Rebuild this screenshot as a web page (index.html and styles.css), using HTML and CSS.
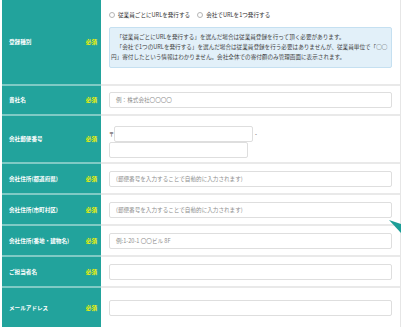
FILE: index.html
```html
<!DOCTYPE html>
<html lang="ja">
<head>
  <meta charset="UTF-8">
  <meta name="viewport" content="width=device-width, initial-scale=1.0">
  <title>企業登録</title>
  <link rel="stylesheet" href="styles.css">
</head>
<body>
<div class="form">
  <!-- 登録種別 -->
  <div class="row row-type">
    <div class="label"><span>登録種別</span><span class="req">必須</span></div>
    <div class="field field-type">
      <div class="radios">
        <label class="radio"><span class="dot"></span>従業員ごとにURLを発行する</label>
        <label class="radio"><span class="dot"></span>会社でURLを1つ発行する</label>
      </div>
      <div class="info">
        <p>「従業員ごとにURLを発行する」を選んだ場合は従業員登録を行って頂く必要があります。</p>
        <p>「会社で1つのURLを発行する」を選んだ場合は従業員登録を行う必要はありませんが、従業員単位で「○○円」寄付したという情報はわかりません。会社全体での寄付額のみ管理画面に表示されます。</p>
      </div>
    </div>
  </div>

  <div class="row row-name">
    <div class="label"><span>貴社名</span><span class="req">必須</span></div>
    <div class="field"><div class="input placeholder">例：株式会社〇〇〇〇</div></div>
  </div>

  <div class="row row-zip">
    <div class="label"><span>会社郵便番号</span><span class="req">必須</span></div>
    <div class="field field-zip">
      <div class="zip-line"><span class="mark">〒</span><div class="input zip1"></div><span class="dash">-</span></div>
      <div class="input zip2"></div>
    </div>
  </div>

  <div class="row">
    <div class="label"><span>会社住所(都道府県)</span><span class="req">必須</span></div>
    <div class="field"><div class="input placeholder">(郵便番号を入力することで自動的に入力されます)</div></div>
  </div>

  <div class="row">
    <div class="label"><span>会社住所(市町村区)</span><span class="req">必須</span></div>
    <div class="field"><div class="input placeholder">(郵便番号を入力することで自動的に入力されます)</div></div>
  </div>

  <div class="row">
    <div class="label"><span>会社住所(番地・建物名)</span><span class="req">必須</span></div>
    <div class="field"><div class="input placeholder">例:1-20-1 〇〇ビル 8F</div></div>
  </div>

  <div class="row">
    <div class="label"><span>ご担当者名</span><span class="req">必須</span></div>
    <div class="field"><div class="input"></div></div>
  </div>

  <div class="row row-last">
    <div class="label"><span>メールアドレス</span><span class="req">必須</span></div>
    <div class="field"><div class="input"></div></div>
  </div>
</div>

<!-- page-top button edge -->
<svg class="pagetop" width="12" height="13" viewBox="0 0 12 13">
  <polygon points="0,0 12,4 12,13" fill="#1c9e97"/>
</svg>
</body>
</html>
```

FILE: styles.css
```css
/* General */
body {
  margin: 0;
  font-family: "Noto Sans CJK JP", "Noto Sans", sans-serif;
  font-size: 5.6px;
  color: #333;
  background: #fff;
  overflow: hidden;
}
.form {
  padding-left: 2px;
  border-right: 1px solid #e6e6e6;
}
.row {
  display: flex;
  height: 31px;
}
.row-type { height: 86px; }
.row-name { height: 30px; }
.row-zip { height: 48px; }
.row-last { height: 40px; }
.row .label,
.row .field {
  border-bottom: 2px solid #e9e9e9;
}
.row .label {
  border-bottom-color: #7fcac5;
}
.row-last .label,
.row-last .field {
  border-bottom: none;
}

/* Label column */
.label {
  width: 99px;
  flex-shrink: 0;
  box-sizing: border-box;
  background: #22a39c;
  color: #fff;
  font-weight: bold;
  display: flex;
  align-items: center;
  justify-content: space-between;
  padding: 0 4px 0 7px;
}
.req {
  color: #f6f400;
}

/* Field column */
.field {
  flex: 1;
  display: flex;
  align-items: center;
  padding: 0 8px;
}
.input {
  flex: 1;
  box-sizing: border-box;
  height: 16px;
  border: 1px solid #dedede;
  border-radius: 2px;
  background: #fff;
  display: flex;
  align-items: center;
  padding-left: 6px;
}
.placeholder {
  color: #8e8e8e;
}

/* 登録種別 */
.field-type {
  flex-direction: column;
  align-items: stretch;
  justify-content: flex-start;
  padding-top: 10px;
}
.radios {
  display: flex;
  gap: 7px;
  height: 10px;
  align-items: center;
  margin-bottom: 7px;
}
.radio {
  display: flex;
  align-items: center;
  gap: 3px;
}
.dot {
  width: 4px;
  height: 4px;
  border: 1px solid #b5b5b5;
  border-radius: 50%;
  background: #fff;
}
.info {
  background: #e2f0f9;
  border: 1px solid #c5e0f1;
  border-radius: 2px;
  padding: 4px 2px 5px 1px;
  color: #444;
  line-height: 10px;
}
.info p {
  margin: 0;
  text-indent: 1em;
}

/* 郵便番号 */
.field-zip {
  flex-direction: column;
  align-items: flex-start;
  justify-content: center;
  gap: 0;
  padding-top: 6px;
}
.zip-line {
  display: flex;
  align-items: center;
}
.mark {
  width: 5px;
  font-size: 5px;
  margin-top: -2px;
}
.dash {
  margin-left: 2px;
}
.zip1 {
  flex: none;
  width: 139px;
}
.zip2 {
  flex: none;
  width: 139px;
}

/* page-top tab */
.pagetop {
  position: absolute;
  left: 389px;
  top: 220px;
}
```
